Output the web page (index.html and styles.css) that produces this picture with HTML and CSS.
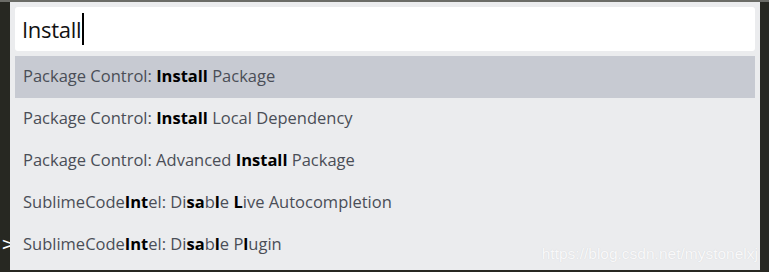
FILE: index.html
```html
<!DOCTYPE html>
<html lang="en">
<head>
    <meta charset="UTF-8">
    <title>Command Palette</title>
    <link rel="stylesheet" href="styles.css">
</head>
<body>
    <div class="topbar"></div>
    <div class="workspace">
        <div class="gutter"><span class="caret">&gt;</span></div>
        <div class="palette">
            <div class="search">
                <span class="query">Install</span><span class="cursor"></span>
            </div>
            <ul class="results">
                <li class="item selected">Package Control: <b>Install</b> Package</li>
                <li class="item">Package Control: <b>Install</b> Local Dependency</li>
                <li class="item">Package Control: Advanced <b>Install</b> Package</li>
                <li class="item">SublimeCode<b>Int</b>el: Di<b>sa</b>b<b>l</b>e <b>L</b>ive Autocompletion</li>
                <li class="item">SublimeCode<b>Int</b>el: Di<b>sa</b>b<b>l</b>e P<b>l</b>ugin</li>
            </ul>
            <span class="watermark">https://blog.csdn.net/mystonelxj</span>
        </div>
        <div class="side"></div>
    </div>
</body>
</html>
```

FILE: styles.css
```css
body {
    margin: 0;
    background-color: #272822;
    font-family: "Open Sans", "Noto Sans", sans-serif;
    height: 272px;
    overflow: hidden;
}
.topbar {
    height: 2px;
    background-color: #6b6c67;
}
.workspace {
    display: flex;
    height: 268px;
}
.gutter {
    width: 10px;
    position: relative;
}
.caret {
    position: absolute;
    left: 1px;
    top: 231px;
    color: #fff;
    font-size: 18px;
    font-family: "DejaVu Sans", sans-serif;
}
.palette {
    width: 750px;
    background-color: #ebecee;
    padding: 5px 5px 0 5px;
    box-sizing: border-box;
    position: relative;
}
.side {
    flex: 1;
}
.search {
    background-color: #fff;
    border-radius: 3px;
    height: 44px;
    display: flex;
    align-items: center;
    padding-left: 7px;
}
.query {
    font-size: 22px;
    color: #111;
    letter-spacing: -0.3px;
}
.cursor {
    width: 2px;
    height: 32px;
    background-color: #000;
    margin-left: 1px;
}
.results {
    list-style: none;
    margin: 5px 0 0 0;
    padding: 0;
}
.item {
    height: 42px;
    line-height: 39px;
    padding-left: 8px;
    font-size: 16.5px;
    color: #4a4e57;
}
.item b {
    color: #000;
    font-weight: bold;
}
.item.selected {
    background-color: #c7cad2;
}
.watermark {
    position: absolute;
    right: 2px;
    bottom: 7px;
    font-family: "Liberation Sans", Arial, sans-serif;
    font-size: 15.5px;
    color: #f9f9fa;
    text-shadow: 0 0 1px #cfd0d3;
}
```
